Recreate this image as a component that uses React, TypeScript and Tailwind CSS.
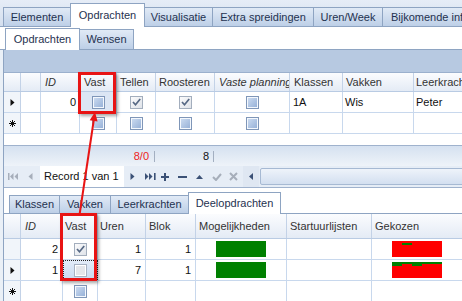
import React from "react";

type CK = "blue" | "checked" | "gray";

function Box({ kind }: { kind: CK }) {
  if (kind === "blue")
    return (
      <div className="w-[13px] h-[13px] border border-[#7f96b8] bg-[#f4f8fd] p-[1px]">
        <div className="w-full h-full bg-linear-to-br from-[#cadaf0] to-[#98b2d8]" />
      </div>
    );
  if (kind === "gray")
    return (
      <div className="w-[13px] h-[13px] border border-[#a7b2c2] bg-white p-[1px]">
        <div className="w-full h-full bg-[#e4e6ea]" />
      </div>
    );
  return (
    <div className="w-[13px] h-[13px] border border-[#a3aebd] bg-linear-to-br from-[#fbfbfc] to-[#dfe3e9]">
      <svg width="11" height="11" viewBox="0 0 11 11" className="block">
        <path d="M2 5 L4.5 7.8 L9.2 2" stroke="#566884" strokeWidth="1.7" fill="none" />
      </svg>
    </div>
  );
}

function RowArrow() {
  return (
    <svg width="5" height="7" viewBox="0 0 5 7" className="block">
      <polygon points="0.5,0 4.5,3.5 0.5,7" fill="#111" />
    </svg>
  );
}

function NewRow() {
  return (
    <svg width="7" height="7" viewBox="0 0 7 7" className="block">
      <path d="M3.5 0 V7 M0 3.5 H7 M1 1 L6 6 M6 1 L1 6" stroke="#111" strokeWidth="1" fill="none" />
    </svg>
  );
}

function GreenBar() {
  return (
    <svg width="50" height="16" viewBox="0 0 50 16" className="block">
      <rect x="0" y="0" width="50" height="16" fill="#008000" />
    </svg>
  );
}

function RedBar({ v }: { v: number }) {
  return (
    <svg width="50" height="16" viewBox="0 0 50 16" className="block">
      <rect x="0" y="0" width="50" height="16" fill="#ff0000" />
      {v === 1 ? (
        <rect x="10" y="2" width="10" height="2" fill="#008000" />
      ) : (
        <g fill="#008000">
          <rect x="0" y="0" width="10" height="4" />
          <rect x="10" y="0" width="10" height="2" />
          <rect x="20" y="0" width="10" height="4" />
          <rect x="30" y="0" width="20" height="2" />
        </g>
      )}
    </svg>
  );
}

const tabBase =
  "shrink-0 flex items-center border border-b-0 border-[#8ea4c2] text-[#1f3250] -ml-px whitespace-nowrap";
const tabInactive = tabBase + " bg-linear-to-b from-[#e1eaf6] to-[#bdcfe7]";
const tabActive = tabBase + " bg-white -mb-px";

const hdr =
  "shrink-0 h-full flex items-center border-r border-[#c3d2e7] bg-linear-to-b from-[#fbfcfe] to-[#e4ebf5] text-[#333] whitespace-nowrap overflow-hidden";
const cell = "shrink-0 h-full flex items-center border-r border-[#c8d8ed] whitespace-nowrap overflow-hidden";
const ind = "shrink-0 h-full flex items-center justify-center border-r border-[#c3d2e7] bg-[#f1f5fa]";

const act = "#3b5176";
const dis = "#a6aeba";

export default function App() {
  return (
    <div className="relative w-[462px] h-[301px] overflow-hidden bg-white text-[11px] leading-none text-[#111] font-['Liberation_Sans',Arial,sans-serif]">
      {/* outer tabs */}
      <div className="h-[27px] flex items-end pl-[4px] bg-linear-to-b from-[#e6edf7] to-[#d4dfee] border-b border-[#8ea4c2]">
        <div className={tabInactive + " w-[68px] h-[19px] justify-center"}>Elementen</div>
        <div className={tabActive + " w-[75px] h-[24px] justify-center"}>Opdrachten</div>
        <div className={tabInactive + " w-[69px] h-[19px] justify-center"}>Visualisatie</div>
        <div className={tabInactive + " w-[102px] h-[19px] justify-center"}>Extra spreidingen</div>
        <div className={tabInactive + " w-[70px] h-[19px] justify-center"}>Uren/Week</div>
        <div className={tabInactive + " w-[130px] h-[19px] justify-start pl-[8px]"}>Bijkomende informatie</div>
      </div>

      {/* inner tabs */}
      <div className="h-[23px] flex items-end pl-[6px] border-b border-[#8ea4c2] bg-white">
        <div className={tabActive + " w-[75px] h-[22px] justify-center"}>Opdrachten</div>
        <div className={tabInactive + " w-[55px] h-[20px] justify-center"}>Wensen</div>
      </div>

      <div className="flex h-[251px]">
        <div className="w-[3px] shrink-0 bg-[#eaf0f7]" />
        <div className="w-[459px] shrink-0 border-l border-[#8ea4c2] flex flex-col">
          {/* group band */}
          <div className="h-[23px] shrink-0 bg-[#b7c9e1] border-b border-[#9bb0cd]" />

          {/* top grid header */}
          <div className="h-[19px] shrink-0 flex border-b border-[#b9cbe3]">
            <div className={ind + " w-[17px] bg-linear-to-b from-[#fbfcfe] to-[#e4ebf5]"} />
            <div className={hdr + " w-[20px]"} />
            <div className={hdr + " w-[39px] pl-[4px] italic"}>ID</div>
            <div className={hdr + " w-[37px] pl-[4px]"}>Vast</div>
            <div className={hdr + " w-[39px] pl-[3px]"}>Tellen</div>
            <div className={hdr + " w-[59px] pl-[3px]"}>Roosteren</div>
            <div className={hdr + " w-[75px] pl-[4px] italic"}>Vaste planning</div>
            <div className={hdr + " w-[53px] pl-[4px]"}>Klassen</div>
            <div className={hdr + " w-[71px] pl-[3px]"}>Vakken</div>
            <div className={hdr + " w-[120px] pl-[2px]"}>Leerkrachten</div>
          </div>

          {/* top grid row 1 */}
          <div className="h-[21px] shrink-0 flex border-b border-[#c8d8ed]">
            <div className={ind + " w-[17px]"}>
              <RowArrow />
            </div>
            <div className={cell + " w-[20px]"} />
            <div className={cell + " w-[39px] justify-end pr-[3px]"}>0</div>
            <div className={cell + " w-[37px] justify-center bg-[#dce6f4]"}>
              <Box kind="blue" />
            </div>
            <div className={cell + " w-[39px] justify-center"}>
              <Box kind="checked" />
            </div>
            <div className={cell + " w-[59px] justify-center"}>
              <Box kind="checked" />
            </div>
            <div className={cell + " w-[75px] justify-center"}>
              <Box kind="blue" />
            </div>
            <div className={cell + " w-[53px] pl-[3px]"}>1A</div>
            <div className={cell + " w-[71px] pl-[2px]"}>Wis</div>
            <div className={cell + " w-[120px] pl-[2px]"}>Peter</div>
          </div>

          {/* top grid new row */}
          <div className="h-[21px] shrink-0 flex border-b border-[#c8d8ed]">
            <div className={ind + " w-[17px]"}>
              <NewRow />
            </div>
            <div className={cell + " w-[20px]"} />
            <div className={cell + " w-[39px]"} />
            <div className={cell + " w-[37px] justify-center"}>
              <Box kind="blue" />
            </div>
            <div className={cell + " w-[39px] justify-center"}>
              <Box kind="blue" />
            </div>
            <div className={cell + " w-[59px] justify-center"}>
              <Box kind="blue" />
            </div>
            <div className={cell + " w-[75px] justify-center"}>
              <Box kind="blue" />
            </div>
            <div className={cell + " w-[53px]"} />
            <div className={cell + " w-[71px]"} />
            <div className={cell + " w-[120px]"} />
          </div>

          <div className="h-[11px] shrink-0 bg-white" />

          {/* footer */}
          <div className="h-[21px] shrink-0 flex border-t border-[#9fb2cd] bg-linear-to-b from-[#d5e1f0] to-[#eef3f9]">
            <div className="w-[113px] shrink-0" />
            <div className="w-[39px] shrink-0 flex items-center justify-end">
              <span className="text-[#ee1c1c] pr-[5px]">8/0</span>
              <div className="w-px h-[11px] bg-[#a3afc1] mr-[1px]" />
            </div>
            <div className="w-[59px] shrink-0 flex items-center justify-end">
              <span className="pr-[4px]">8</span>
              <div className="w-px h-[11px] bg-[#a3afc1] mr-[1px]" />
            </div>
          </div>

          {/* navigator */}
          <div className="h-[22px] shrink-0 flex items-center border-b border-[#9fb2cd] bg-[#e6edf6]">
            <svg width="10" height="7" viewBox="0 0 10 7" className="block shrink-0 ml-[4px]">
              <rect x="0" y="0" width="1.5" height="7" fill={dis} />
              <polygon points="5.5,0 2,3.5 5.5,7" fill={dis} />
              <polygon points="10,0 6.5,3.5 10,7" fill={dis} />
            </svg>
            <svg width="5" height="7" viewBox="0 0 5 7" className="block shrink-0 ml-[10px]">
              <polygon points="4.5,0 0.5,3.5 4.5,7" fill={dis} />
            </svg>
            <div className="w-[84px] h-[21px] shrink-0 ml-[7px] bg-white flex items-center pl-[4px] text-[#111]">
              Record 1 van 1
            </div>
            <svg width="5" height="7" viewBox="0 0 5 7" className="block shrink-0 ml-[6px]">
              <polygon points="0.5,0 4.5,3.5 0.5,7" fill={act} />
            </svg>
            <svg width="11" height="7" viewBox="0 0 11 7" className="block shrink-0 ml-[10px]">
              <polygon points="0,0 3.5,3.5 0,7" fill={act} />
              <polygon points="4,0 7.5,3.5 4,7" fill={act} />
              <rect x="9" y="0" width="1.6" height="7" fill={act} />
            </svg>
            <svg width="8" height="8" viewBox="0 0 8 8" className="block shrink-0 ml-[5px]">
              <rect x="0" y="3" width="8" height="2" fill={act} />
              <rect x="3" y="0" width="2" height="8" fill={act} />
            </svg>
            <svg width="9" height="2" viewBox="0 0 9 2" className="block shrink-0 ml-[9px]">
              <rect x="0" y="0" width="9" height="2" fill={act} />
            </svg>
            <svg width="7" height="4" viewBox="0 0 7 4" className="block shrink-0 ml-[9px]">
              <polygon points="0,4 3.5,0 7,4" fill={act} />
            </svg>
            <svg width="10" height="8" viewBox="0 0 10 8" className="block shrink-0 ml-[9px]">
              <path d="M1 4 L4 7 L9 1" stroke={dis} strokeWidth="2" fill="none" />
            </svg>
            <svg width="9" height="9" viewBox="0 0 9 9" className="block shrink-0 ml-[7px]">
              <path d="M1 1 L8 8 M8 1 L1 8" stroke={dis} strokeWidth="2" fill="none" />
            </svg>
            <div className="w-[16px] h-full shrink-0 ml-[5px] flex items-center justify-center bg-[#dfe7f2]">
              <svg width="4" height="7" viewBox="0 0 4 7" className="block">
                <polygon points="4,0 0,3.5 4,7" fill={act} />
              </svg>
            </div>
            <div className="w-[230px] h-[17px] shrink-0 ml-px rounded-[2px] border border-[#a6b9d3] bg-linear-to-b from-[#eef3fa] to-[#d3dff0]" />
          </div>

          <div className="h-[4px] shrink-0 bg-white" />

          {/* bottom tabs */}
          <div className="h-[22px] shrink-0 flex items-end pl-[6px] border-b border-[#8ea4c2] bg-white">
            <div className={tabInactive + " w-[51px] h-[18px] justify-center"}>Klassen</div>
            <div className={tabInactive + " w-[52px] h-[18px] justify-center"}>Vakken</div>
            <div className={tabInactive + " w-[79px] h-[18px] justify-center"}>Leerkrachten</div>
            <div className={tabActive + " w-[93px] h-[22px] justify-center"}>Deelopdrachten</div>
          </div>

          {/* bottom grid header */}
          <div className="h-[25px] shrink-0 flex border-b border-[#b9cbe3]">
            <div className={ind + " w-[17px] bg-linear-to-b from-[#fbfcfe] to-[#e4ebf5]"} />
            <div className={hdr + " w-[42px] pl-[4px] italic"}>ID</div>
            <div className={hdr + " w-[35px] pl-[2px]"}>Vast</div>
            <div className={hdr + " w-[48px] pl-[2px]"}>Uren</div>
            <div className={hdr + " w-[50px] pl-[3px]"}>Blok</div>
            <div className={hdr + " w-[91px] pl-[3px]"}>Mogelijkheden</div>
            <div className={hdr + " w-[85px] pl-[3px]"}>Startuurlijsten</div>
            <div className={hdr + " w-[100px] pl-[3px]"}>Gekozen</div>
          </div>

          {/* bottom row 1 */}
          <div className="h-[21px] shrink-0 flex border-b border-[#c8d8ed]">
            <div className={ind + " w-[17px]"} />
            <div className={cell + " w-[42px] justify-end pr-[4px]"}>2</div>
            <div className={cell + " w-[35px] justify-center"}>
              <Box kind="checked" />
            </div>
            <div className={cell + " w-[48px] justify-end pr-[4px]"}>1</div>
            <div className={cell + " w-[50px] justify-end pr-[4px]"}>1</div>
            <div className={cell + " w-[91px] justify-center"}>
              <GreenBar />
            </div>
            <div className={cell + " w-[85px]"} />
            <div className={cell + " w-[91px] justify-center"}>
              <RedBar v={1} />
            </div>
          </div>

          {/* bottom row 2 */}
          <div className="h-[21px] shrink-0 flex border-b border-[#c8d8ed]">
            <div className={ind + " w-[17px]"}>
              <RowArrow />
            </div>
            <div className={cell + " w-[42px] justify-end pr-[4px]"}>1</div>
            <div
              className={
                cell +
                " w-[35px] justify-center bg-linear-to-b from-[#e3ecf8] to-[#c9daf0] outline-1 outline-dotted outline-[#222] -outline-offset-1"
              }
            >
              <Box kind="gray" />
            </div>
            <div className={cell + " w-[48px] justify-end pr-[4px]"}>7</div>
            <div className={cell + " w-[50px] justify-end pr-[4px]"}>1</div>
            <div className={cell + " w-[91px] justify-center"}>
              <GreenBar />
            </div>
            <div className={cell + " w-[85px]"} />
            <div className={cell + " w-[91px] justify-center"}>
              <RedBar v={2} />
            </div>
          </div>

          {/* bottom new row */}
          <div className="h-[21px] shrink-0 flex border-b border-[#c8d8ed]">
            <div className={ind + " w-[17px]"}>
              <NewRow />
            </div>
            <div className={cell + " w-[42px]"} />
            <div className={cell + " w-[35px] justify-center"}>
              <Box kind="blue" />
            </div>
            <div className={cell + " w-[48px]"} />
            <div className={cell + " w-[50px]"} />
            <div className={cell + " w-[91px]"} />
            <div className={cell + " w-[85px]"} />
            <div className={cell + " w-[91px]"} />
          </div>
        </div>
      </div>

      {/* annotations */}
      <div className="absolute left-[78px] top-[72px] w-[38px] h-[42px] border-[3px] border-[#e81414] shadow-[2px_2px_3px_rgba(0,0,0,0.35)]" />
      <div className="absolute left-[60px] top-[213px] w-[37px] h-[68px] border-[3px] border-[#e81414] shadow-[2px_2px_3px_rgba(0,0,0,0.35)]" />
      <svg
        width="462"
        height="301"
        viewBox="0 0 462 301"
        className="absolute left-0 top-0 pointer-events-none"
      >
        <line x1="79.5" y1="215" x2="93.8" y2="120" stroke="#e81414" strokeWidth="2" />
        <polygon points="95,112 97.6,121.5 89.7,120.3" fill="#e81414" />
      </svg>
    </div>
  );
}
